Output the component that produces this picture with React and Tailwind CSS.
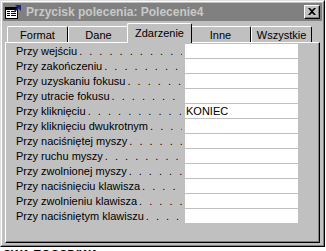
import React from "react";

const rows = [
  ["Przy wejściu", ""],
  ["Przy zakończeniu", ""],
  ["Przy uzyskaniu fokusu", ""],
  ["Przy utracie fokusu", ""],
  ["Przy kliknięciu", "KONIEC"],
  ["Przy kliknięciu dwukrotnym", ""],
  ["Przy naciśniętej myszy", ""],
  ["Przy ruchu myszy", ""],
  ["Przy zwolnionej myszy", ""],
  ["Przy naciśnięciu klawisza", ""],
  ["Przy zwolnieniu klawisza", ""],
  ["Przy naciśniętym klawiszu", ""],
];

const tabs = ["Format", "Dane", "Zdarzenie", "Inne", "Wszystkie"];

function FormIcon() {
  return (
    <svg width="16" height="15" viewBox="0 0 16 15" className="block">
      <rect x="0.5" y="2.5" width="12" height="11" fill="#fff" stroke="#000" />
      <rect x="1" y="3" width="11" height="2" fill="#000" />
      <rect x="2" y="6" width="3" height="1" fill="#000" />
      <rect x="6" y="6" width="5" height="1" fill="#000" />
      <rect x="2" y="8" width="3" height="1" fill="#000" />
      <rect x="6" y="8" width="5" height="1" fill="#000" />
      <rect x="2" y="10" width="3" height="1" fill="#000" />
      <rect x="6" y="10" width="5" height="1" fill="#000" />
      <path d="M10 0 L16 0 L16 6 Z" fill="#202080" />
      <path d="M9 7 L15 1" stroke="#202080" strokeWidth="1.5" />
    </svg>
  );
}

function CloseButton() {
  return (
    <div className="w-[16px] h-[14px] bg-[#c0c0c0] border-t border-l border-t-white border-l-white border-r border-b border-r-black border-b-black">
      <div className="w-full h-full border-r border-b border-r-[#808080] border-b-[#808080] flex items-center justify-center">
        <svg width="8" height="7" viewBox="0 0 8 7" className="block">
          <path d="M0 0h2l2 2 2-2h2L5 3.5 8 7H6L4 5 2 7H0l3-3.5z" fill="#000" />
        </svg>
      </div>
    </div>
  );
}

function Tab({ label, selected }) {
  if (selected) {
    return (
      <div className="relative z-10 -mx-[2px] w-[65px] h-[20px] bg-[#c0c0c0] border-t border-l border-t-white border-l-white border-r border-r-black rounded-t-[2px] flex justify-center pt-[3px]">
        <span>{label}</span>
      </div>
    );
  }
  return (
    <div className="mt-[3px] w-[61px] h-[16px] bg-[#c0c0c0] border-t border-l border-t-white border-l-white border-r border-r-black rounded-t-[2px] flex justify-center pt-[2px]">
      <span>{label}</span>
    </div>
  );
}

export default function App() {
  return (
    <div className="w-[326px] h-[251px] bg-white overflow-hidden font-['Liberation_Sans',Arial,sans-serif] text-[11px] leading-[13px] text-black">
      <div className="w-[325px] h-[247px] bg-[#c0c0c0] border-t border-l border-t-[#dfdfdf] border-l-[#dfdfdf] border-r border-b border-r-black border-b-black">
        <div className="h-full border-t border-l border-t-white border-l-white border-r border-b border-r-[#808080] border-b-[#808080] p-px flex flex-col">
          {/* title bar */}
          <div className="h-[18px] bg-[#808080] flex items-center pl-[2px] pr-[2px]">
            <FormIcon />
            <span className="ml-[5px] font-bold text-[12px] text-[#c8c8c8]">
              Przycisk polecenia: Polecenie4
            </span>
            <div className="ml-auto">
              <CloseButton />
            </div>
          </div>
          {/* tabs */}
          <div className="mt-[2px] pl-[4px] flex items-start h-[19px]">
            {tabs.map((t) => (
              <Tab key={t} label={t} selected={t === "Zdarzenie"} />
            ))}
          </div>
          {/* panel */}
          <div className="mx-[2px] h-[201px] border-t border-l border-t-white border-l-white border-r border-b border-r-black border-b-black">
            <div className="h-full border-r border-b border-r-[#808080] border-b-[#808080] pt-px pl-[10px] flex flex-col">
              {rows.map(([label, val]) => (
                <div key={label} className="flex h-[14px] mb-px">
                  <div className="w-[169px] pr-[3px] flex overflow-hidden whitespace-nowrap items-center">
                    <span className="shrink-0">{label}</span>
                    <span className="overflow-hidden min-w-0 flex-1 tracking-[2px] pl-[2px]">
                      {". . . . . . . . . . . . . . . . . . . . . . . . ."}
                    </span>
                  </div>
                  <div className="w-[113px] bg-white flex items-center pl-px">{val}</div>
                </div>
              ))}
            </div>
          </div>
        </div>
      </div>
      <div className="h-[4px] overflow-hidden relative">
        <div className="absolute left-[3px] top-[2px] font-bold text-[12px] leading-[12px] whitespace-nowrap">
          SWA EQCSDIWA
        </div>
      </div>
    </div>
  );
}
